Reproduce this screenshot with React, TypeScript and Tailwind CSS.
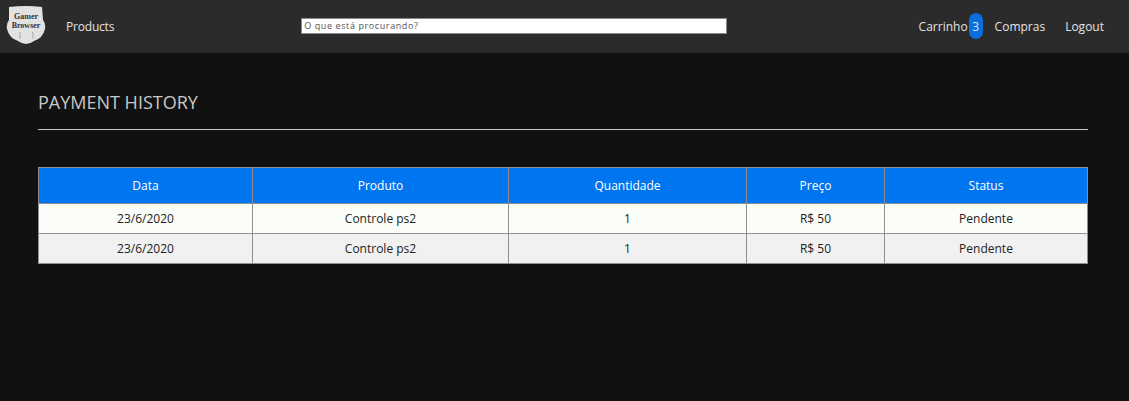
const rows = [
  { date: "23/6/2020", product: "Controle ps2", qty: 1, price: "R$ 50", status: "Pendente", bg: "bg-[#fbfdf8]" },
  { date: "23/6/2020", product: "Controle ps2", qty: 1, price: "R$ 50", status: "Pendente", bg: "bg-[#f1f1f1]" },
];

const headers = [
  { label: "Data", width: "w-[214px]" },
  { label: "Produto", width: "w-[256px]" },
  { label: "Quantidade", width: "w-[238px]" },
  { label: "Preço", width: "w-[138px]" },
  { label: "Status", width: "w-[203px]" },
];

function Logo() {
  return (
    <div className="relative w-[40px] h-[40px] shrink-0">
      <svg viewBox="0 0 40 40" className="w-full h-full">
        <path d="M3 1 Q20 -1 36 1 L37 14 Q40 18 39 23 Q37 32 28 35 Q20 41 12 35 Q3 32 1 23 Q0 18 3 14 Z" fill="#e2e2e2" />
        <path d="M15 26 l-1 1 v6 M26 26 l1 1 v6" stroke="#a8a8a8" strokeWidth="1" fill="none" />
      </svg>
      <div className="absolute inset-x-0 top-[6px] text-center font-['Liberation_Serif',serif] font-bold text-[8px] leading-[9px] text-[#333]">
        <div>Gamer</div>
        <div>Browser</div>
      </div>
    </div>
  );
}

export default function App() {
  return (
    <div className="min-h-[401px] bg-[#111111] font-['Open_Sans',sans-serif] text-[12px]">
      <nav className="h-[53px] bg-[#2b2b2b] border-b border-[#262626] flex items-center pl-[6px] pr-[25px]">
        <Logo />
        <a className="ml-[20px] pt-[2px] tracking-[-0.2px] text-[#e2e2e2]">Products</a>
        <div className="ml-[187px] w-[426px] h-[16px] bg-white border border-[#8a8a8a] flex items-center px-[2px]">
          <span className="text-[9px] tracking-[0.6px] text-[#555]">O que está procurando?</span>
        </div>
        <div className="ml-auto flex items-center text-[#e2e2e2]">
          <a className="pt-[2px]">Carrinho</a>
          <span className="ml-[1px] w-[14px] h-[26px] rounded-full bg-[#0a6fdc] flex items-center justify-center pt-[2px] text-[#d7e8fb]">3</span>
          <a className="ml-[12px] pt-[2px]">Compras</a>
          <a className="ml-[20px] pt-[2px]">Logout</a>
        </div>
      </nav>
      <main className="px-[38px] pr-[41px]">
        <h1 className="pt-[37px] text-[18px] leading-[24px] font-medium text-[#c8c8c8]">PAYMENT HISTORY</h1>
        <hr className="mt-[15px] border-t border-[#c4c4c4]" />
        <table className="mt-[37px] w-[1049px] table-fixed border-collapse text-center">
          <thead>
            <tr className="h-[36px] bg-[#0075f0] text-white">
              {headers.map((h) => (
                <th key={h.label} className={`${h.width} border border-[#8f8f8f] font-normal`}>{h.label}</th>
              ))}
            </tr>
          </thead>
          <tbody>
            {rows.map((r, i) => (
              <tr key={i} className={`h-[30px] text-[#222] ${r.bg}`}>
                <td className="border border-[#8f8f8f]">{r.date}</td>
                <td className="border border-[#8f8f8f]">{r.product}</td>
                <td className="border border-[#8f8f8f]">{r.qty}</td>
                <td className="border border-[#8f8f8f]">{r.price}</td>
                <td className="border border-[#8f8f8f]">{r.status}</td>
              </tr>
            ))}
          </tbody>
        </table>
      </main>
    </div>
  );
}
